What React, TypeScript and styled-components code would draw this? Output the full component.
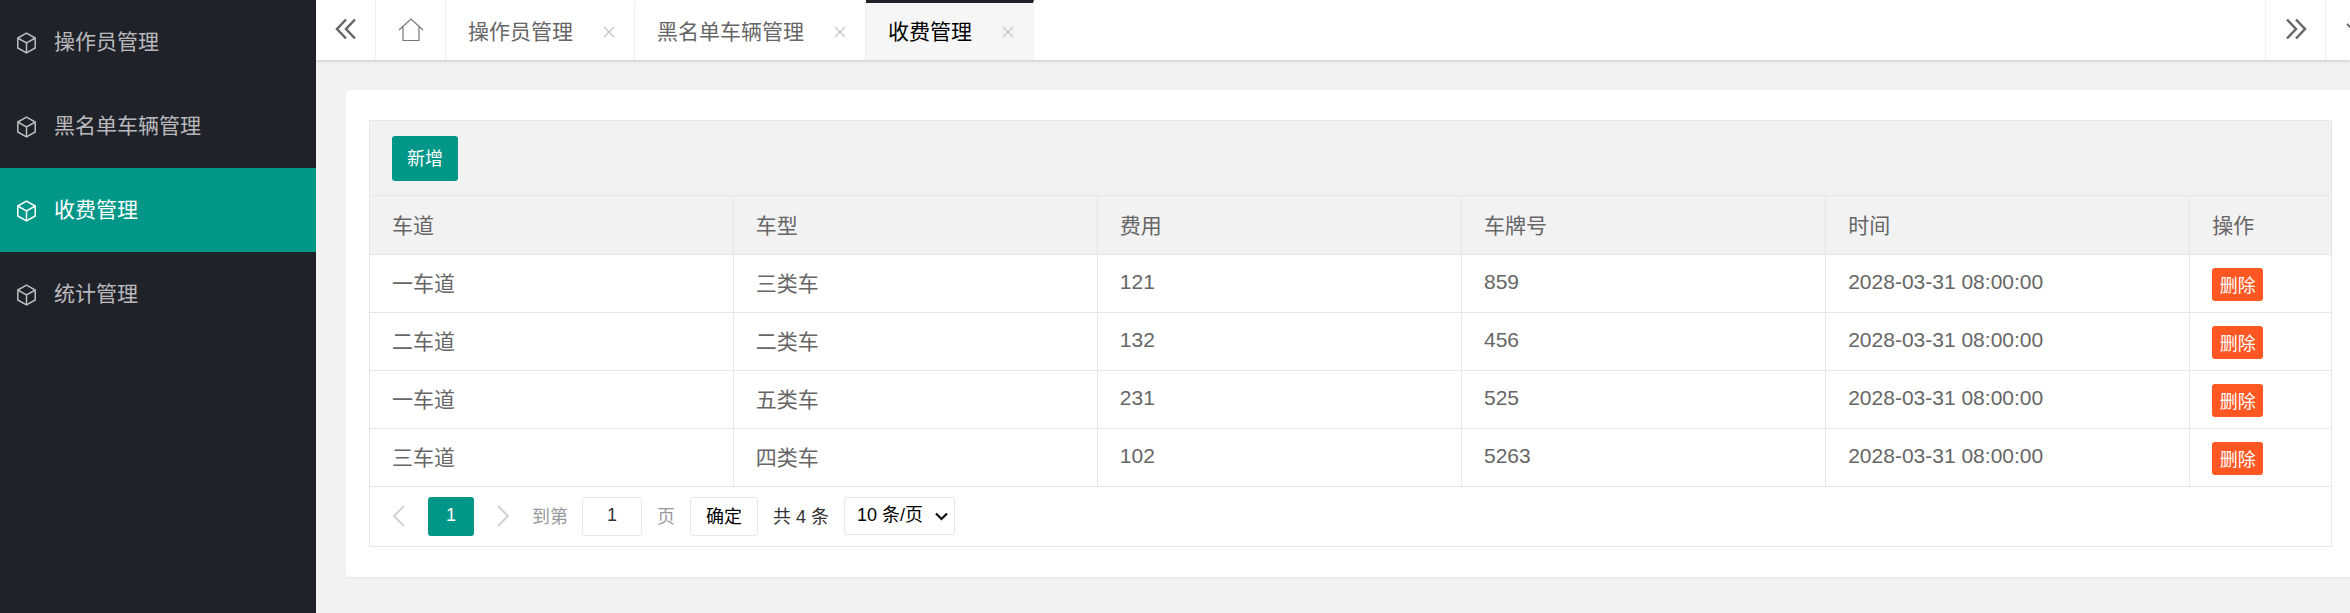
import styled, { createGlobalStyle } from "styled-components";

const menuItems = ["操作员管理", "黑名单车辆管理", "收费管理", "统计管理"];
const tabs = ["操作员管理", "黑名单车辆管理", "收费管理"];
const columns = [
  { title: "车道", width: 363 },
  { title: "车型", width: 364 },
  { title: "费用", width: 364 },
  { title: "车牌号", width: 364 },
  { title: "时间", width: 364 },
  { title: "操作", width: 141 },
];
const rows = [
  ["一车道", "三类车", "121", "859", "2028-03-31 08:00:00"],
  ["二车道", "二类车", "132", "456", "2028-03-31 08:00:00"],
  ["一车道", "五类车", "231", "525", "2028-03-31 08:00:00"],
  ["三车道", "四类车", "102", "5263", "2028-03-31 08:00:00"],
];

const GlobalStyle = createGlobalStyle`
  html, body {
    margin: 0;
    height: 613px;
    overflow: hidden;
    background: #f2f2f2;
    font-family: "Liberation Sans", "Noto Sans CJK SC", sans-serif;
  }
  * { box-sizing: border-box; }
`;

function CubeIcon() {
  return (
    <svg width="21" height="22" viewBox="0 0 21 22" fill="none" stroke="currentColor" strokeWidth="1.5">
      <path d="M10.500 1.200 19.200 6v10l-8.700 4.800L1.800 16V6z" />
      <path d="M2.500 6.500 10.500 11l8-4.500M10.500 11v9" />
    </svg>
  );
}

export default function App() {
  return (
    <Layout>
      <GlobalStyle />
      <Sidebar>
        {menuItems.map((item, i) => (
          <MenuItem key={item} active={i === 2}>
            <CubeIcon />
            <MenuLabel>{item}</MenuLabel>
          </MenuItem>
        ))}
      </Sidebar>
      <Main>
        <TabBar>
          <TabButton>
            <svg width="22" height="22" viewBox="0 0 22 22" fill="none" stroke="#666" strokeWidth="2.500">
              <path d="M11 1.500 2 11l9 9.500M20 1.500 11 11l9 9.500" />
            </svg>
          </TabButton>
          <HomeTab>
            <svg width="26" height="23" viewBox="0 0 26 23" fill="none" stroke="#777" strokeWidth="1.200">
              <path d="M1 12 13 1l12 11M5 9v13.500h16V9" />
            </svg>
          </HomeTab>
          <Tabs>
            {tabs.map((tab, i) => (
              <Tab key={tab} active={i === 2}>
                {tab}
                <CloseIcon width="12" height="12" viewBox="0 0 12 12" fill="none" stroke="#c2c2c2" strokeWidth="1.200">
                  <path d="m1 1 10 10M11 1 1 11" />
                </CloseIcon>
              </Tab>
            ))}
          </Tabs>
          <RightButtons>
            <TabButton>
              <svg width="22" height="22" viewBox="0 0 22 22" fill="none" stroke="#666" strokeWidth="2.500">
                <path d="M2 1.500 11 11l-9 9.500M11 1.500l9 9.500-9 9.500" />
              </svg>
            </TabButton>
            <TabButton>
              <svg width="20" height="12" viewBox="0 0 20 12" fill="none" stroke="#666" strokeWidth="1.800">
                <path d="M1 1l9 9 9-9" />
              </svg>
            </TabButton>
          </RightButtons>
        </TabBar>
        <Content>
          <Card>
            <TableBox>
              <Toolbar>
                <PrimaryButton>新增</PrimaryButton>
              </Toolbar>
              <Table>
                <colgroup>
                  {columns.map(c => <col key={c.title} width={c.width} />)}
                </colgroup>
                <thead>
                  <tr>
                    {columns.map(c => <Th key={c.title}>{c.title}</Th>)}
                  </tr>
                </thead>
                <tbody>
                  {rows.map((row, i) => (
                    <tr key={i}>
                      {row.map((cell, j) => <Td key={j}>{cell}</Td>)}
                      <Td><DangerButton>删除</DangerButton></Td>
                    </tr>
                  ))}
                </tbody>
              </Table>
              <Pager>
                <PagerArrow>
                  <svg width="14" height="22" viewBox="0 0 14 22" fill="none" stroke="#d2d2d2" strokeWidth="2">
                    <path d="M12 1 2 11l10 10" />
                  </svg>
                </PagerArrow>
                <CurrentPage>1</CurrentPage>
                <PagerArrow>
                  <svg width="14" height="22" viewBox="0 0 14 22" fill="none" stroke="#d2d2d2" strokeWidth="2">
                    <path d="m2 1 10 10L2 21" />
                  </svg>
                </PagerArrow>
                <PagerLabel>到第</PagerLabel>
                <PageInput defaultValue="1" />
                <PagerLabel>页</PagerLabel>
                <ConfirmButton>确定</ConfirmButton>
                <PagerCount>共 4 条</PagerCount>
                <PageSizeBox>
                  <PageSize defaultValue="10">
                    <option value="10">10 条/页</option>
                    <option value="20">20 条/页</option>
                  </PageSize>
                  <SelectChevron width="13" height="9" viewBox="0 0 13 9" fill="none" stroke="#111" strokeWidth="2.200">
                    <path d="m1 1.500 5.500 5.500L12 1.500" />
                  </SelectChevron>
                </PageSizeBox>
              </Pager>
            </TableBox>
          </Card>
        </Content>
      </Main>
    </Layout>
  );
}

const Layout = styled.div`
  display: flex;
  width: 2350px;
  height: 613px;
  overflow: hidden;
`;

const Sidebar = styled.aside`
  flex: 0 0 316px;
  background: #20222a;
`;

const MenuItem = styled.div<{ active?: boolean }>`
  height: 84px;
  padding-left: 16px;
  display: flex;
  align-items: center;
  gap: 17px;
  font-size: 21px;
  color: ${p => (p.active ? "#fff" : "rgba(255, 255, 255, 0.7)")};
  background: ${p => (p.active ? "#009688" : "transparent")};

  svg { margin-top: 2px; }
`;

const MenuLabel = styled.span`
  margin-bottom: 4px;
`;

const Main = styled.main`
  flex: 1;
  min-width: 0;
`;

const TabBar = styled.header`
  height: 60px;
  display: flex;
  background: #fff;
  box-shadow: 0 1px 3px rgba(0, 0, 0, 0.18);
  position: relative;
`;

const TabButton = styled.div`
  flex: 0 0 60px;
  padding-bottom: 2px;
  display: flex;
  align-items: center;
  justify-content: center;
  border-right: 1px solid #f0f0f0;
`;

const HomeTab = styled(TabButton)`
  flex-basis: 70px;
`;

const Tabs = styled.div`
  flex: 1;
  display: flex;
`;

const Tab = styled.div<{ active?: boolean }>`
  padding: 0 19px 4px 22px;
  display: flex;
  align-items: center;
  gap: 30px;
  font-size: 21px;
  border-right: 1px solid ${p => (p.active ? "transparent" : "#f0f0f0")};
  border-top: 3px solid ${p => (p.active ? "#20222a" : "transparent")};
  color: ${p => (p.active ? "#000" : "#666")};
  background: ${p => (p.active ? "#f6f6f6" : "transparent")};
`;

const CloseIcon = styled.svg`
  margin-top: 5px;
`;

const RightButtons = styled.div`
  display: flex;
  margin-right: -35px;

  ${TabButton} {
    border-right: 0;
    border-left: 1px solid #f0f0f0;
  }
`;

const Content = styled.div`
  padding: 30px 0 0 30px;
`;

const Card = styled.section`
  width: 2008px;
  padding: 30px 22px 30px 23px;
  background: #fff;
  border-radius: 3px;
  box-shadow: 0 1px 2px rgba(0, 0, 0, 0.05);
`;

const TableBox = styled.div`
  border: 1px solid #e6e6e6;
`;

const Toolbar = styled.div`
  height: 75px;
  padding-left: 22px;
  display: flex;
  align-items: center;
  background: #f2f2f2;
  border-bottom: 1px solid #e6e6e6;
`;

const PrimaryButton = styled.button`
  width: 66px;
  height: 45px;
  padding: 0 0 3px;
  border: 0;
  border-radius: 3px;
  font: inherit;
  font-size: 18px;
  color: #fff;
  background: #009688;
`;

const Table = styled.table`
  width: 100%;
  table-layout: fixed;
  border-collapse: collapse;
  font-size: 21px;
  color: #666;
`;

const Th = styled.th`
  height: 58px;
  padding: 0 22px 2px;
  font-weight: 400;
  text-align: left;
  background: #f2f2f2;
  border: 1px solid #e6e6e6;
  border-top: 0;

  &:first-child { border-left: 0; }
  &:last-child { border-right: 0; }
`;

const Td = styled.td`
  height: 58px;
  padding: 0 22px 3px;
  border: 1px solid #e6e6e6;

  &:first-child { border-left: 0; }
  &:last-child { border-right: 0; }
`;

const DangerButton = styled.button`
  display: block;
  width: 51px;
  height: 33px;
  margin-top: 6px;
  padding: 0 0 2px;
  border: 0;
  border-radius: 3px;
  font: inherit;
  font-size: 18px;
  color: #fff;
  background: #ff5722;
`;

const Pager = styled.div`
  height: 59px;
  padding: 0 0 0 22px;
  display: flex;
  align-items: center;
  font-size: 18px;
`;

const PagerArrow = styled.span`
  width: 14px;
  margin-right: 22px;
  display: flex;
`;

const CurrentPage = styled.div`
  width: 46px;
  height: 39px;
  margin-right: 22px;
  padding-bottom: 2px;
  display: flex;
  align-items: center;
  justify-content: center;
  border-radius: 3px;
  color: #fff;
  background: #009688;
`;

const PagerLabel = styled.span`
  margin-bottom: 2px;
  color: #999;
`;

const PageInput = styled.input`
  width: 60px;
  height: 39px;
  margin: 0 15px 0 14px;
  padding: 0 0 2px;
  border: 1px solid #e6e6e6;
  border-radius: 3px;
  font: inherit;
  text-align: center;
  color: #333;
`;

const ConfirmButton = styled.button`
  width: 68px;
  height: 39px;
  margin-left: 15px;
  padding: 0 0 2px;
  border: 1px solid #e6e6e6;
  border-radius: 3px;
  font: inherit;
  color: #000;
  background: #fff;
`;

const PagerCount = styled.span`
  margin: 0 15px 2px;
  color: #333;
`;

const PageSizeBox = styled.div`
  position: relative;
  display: flex;
`;

const PageSize = styled.select`
  width: 111px;
  height: 38px;
  padding: 0 0 2px 12px;
  border: 1px solid #e6e6e6;
  border-radius: 3px;
  font: inherit;
  color: #000;
  background: #fff;
  appearance: none;
`;

const SelectChevron = styled.svg`
  position: absolute;
  right: 7px;
  top: 15px;
  pointer-events: none;
`;
